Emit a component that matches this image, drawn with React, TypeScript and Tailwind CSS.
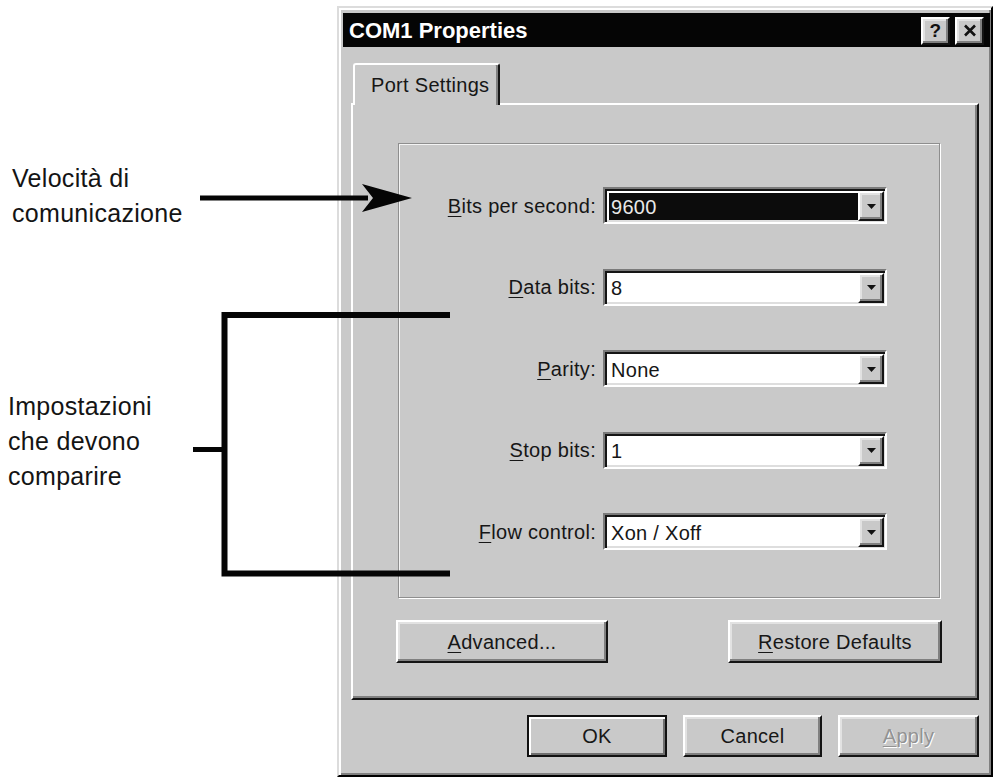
import React from 'react'

const raised =
  'border-2 border-t-white border-l-white border-r-[#141414] border-b-[#141414] shadow-[inset_-2px_-2px_0_#808080,inset_2px_2px_0_#e2e2e2]'

function Key({ children }: { children: React.ReactNode }) {
  return <span className="underline underline-offset-[3px] decoration-1">{children}</span>
}

function Combo({ value, selected }: { value: string; selected?: boolean }) {
  return (
    <div className="w-[284px] h-[37px] flex border-2 border-t-[#7a7a7a] border-l-[#7a7a7a] border-r-white border-b-white shadow-[inset_2px_2px_0_#151515,inset_-2px_-2px_0_#dedede] bg-white">
      <div className="flex-1 pt-[4px] pl-[4px] pb-[2px]">
        <div
          className={`h-full flex items-center pl-[2px] ${
            selected ? 'bg-[#0c0c0c] text-[#e8e8e8]' : 'text-[#161616]'
          }`}
        >
          {value}
        </div>
      </div>
      <div className={`w-[26px] mt-[2px] mb-[1px] mr-[1px] flex items-center justify-center bg-[#c9c9c9] ${raised}`}>
        <svg width="9" height="5" viewBox="0 0 9 5">
          <polygon points="0,0 9,0 4.5,5" fill="#111" />
        </svg>
      </div>
    </div>
  )
}

function Row({ label, value, selected }: { label: React.ReactNode; value: string; selected?: boolean }) {
  return (
    <div className="flex items-center h-[37px]">
      <div className="w-[198px] text-right pr-[1px]">{label}</div>
      <div className="ml-[6px]">
        <Combo value={value} selected={selected} />
      </div>
    </div>
  )
}

function Button({
  children,
  width,
  height,
  isDefault,
  disabled,
}: {
  children: React.ReactNode
  width: string
  height: string
  isDefault?: boolean
  disabled?: boolean
}) {
  return (
    <div
      className={`${width} ${height} flex items-center justify-center bg-[#c9c9c9] ${
        isDefault
          ? 'border-2 border-[#111] shadow-[inset_2px_2px_0_#fff,inset_-2px_-2px_0_#6f6f6f]'
          : raised
      } ${disabled ? 'text-[#939393] [text-shadow:1px_1px_0_#fff]' : 'text-[#171717]'}`}
    >
      {children}
    </div>
  )
}

function Dialog() {
  return (
    <div className="mt-[6px] w-[656px] h-[771px] shrink-0 bg-[#c9c9c9] border-2 border-t-[#dcdcdc] border-l-[#dcdcdc] border-r-black border-b-black shadow-[inset_2px_2px_0_#fff,inset_-2px_-2px_0_#808080] pt-[5px] pl-[4px] pr-[1px] text-[20px] tracking-[0.3px] text-[#161616]">
      <div className="h-[34px] bg-[#050505] flex items-center justify-between pl-[6px] pr-[6px]">
        <span className="text-white font-bold text-[22px] tracking-normal">COM1 Properties</span>
        <div className="flex gap-[5px] pt-[1px]">
          <div className={`w-[29px] h-[28px] flex items-center justify-center bg-[#c9c9c9] ${raised}`}>
            <span className="font-bold text-[19px] leading-none text-[#111]">?</span>
          </div>
          <div className={`w-[29px] h-[28px] flex items-center justify-center bg-[#c9c9c9] ${raised}`}>
            <svg width="14" height="13" viewBox="0 0 14 13">
              <path d="M2 1.5 L12 11.5 M12 1.5 L2 11.5" stroke="#111" strokeWidth="2.6" />
            </svg>
          </div>
        </div>
      </div>

      <div className="mt-[16px] ml-[8px] mr-[11px]">
        <div className="flex pl-[2px]">
          <div className="relative z-10 -mb-[2px] w-[147px] h-[42px] bg-[#c9c9c9] border-t-2 border-l-2 border-r-2 border-t-white border-l-white border-r-[#141414] shadow-[inset_-2px_0_0_#808080] rounded-t-[3px] pl-[16px] pt-[5px]">
            Port Settings
          </div>
        </div>
        <div className="h-[597px] border-2 border-t-white border-l-white border-r-[#141414] border-b-[#141414] shadow-[inset_-2px_-2px_0_#808080]">
          <div className="mt-[38px] ml-[45px] w-[542px] h-[455px] border border-[#8e8e8e] shadow-[1px_1px_0_#fff,inset_1px_1px_0_#f4f4f4] pt-[43px]">
            <div className="flex flex-col gap-[44.5px]">
              <Row label={<><Key>B</Key>its per second:</>} value="9600" selected />
              <Row label={<><Key>D</Key>ata bits:</>} value="8" />
              <Row label={<><Key>P</Key>arity:</>} value="None" />
              <Row label={<><Key>S</Key>top bits:</>} value="1" />
              <Row label={<><Key>F</Key>low control:</>} value="Xon / Xoff" />
            </div>
          </div>
          <div className="mt-[22px] ml-[43px] flex gap-[120px]">
            <Button width="w-[212px]" height="h-[43px]">
              <span><Key>A</Key>dvanced...</span>
            </Button>
            <Button width="w-[214px]" height="h-[43px]">
              <span><Key>R</Key>estore Defaults</span>
            </Button>
          </div>
        </div>
        <div className="mt-[15px] flex justify-end gap-[16px]">
          <Button width="w-[140px]" height="h-[42px]" isDefault>
            OK
          </Button>
          <Button width="w-[139px]" height="h-[42px]">
            Cancel
          </Button>
          <Button width="w-[141px]" height="h-[42px]" disabled>
            <span><Key>A</Key>pply</span>
          </Button>
        </div>
      </div>
    </div>
  )
}

export default function App() {
  return (
    <div className="relative w-[998px] h-[779px] bg-white overflow-hidden font-['Liberation_Sans',Arial,sans-serif] text-[#141414]">
      <div className="flex h-full">
        <div className="w-[337px] shrink-0 pl-[12px] pt-[161px] text-[25px] leading-[35px] tracking-[0.3px]">
          <p>
            Velocità di
            <br />
            comunicazione
          </p>
          <p className="mt-[158px] -ml-[4px]">
            Impostazioni
            <br />
            che devono
            <br />
            comparire
          </p>
        </div>
        <Dialog />
      </div>

      {/* annotation arrow and bracket drawn over the dialog */}
      <svg
        className="absolute inset-0 pointer-events-none"
        width="998"
        height="779"
        viewBox="0 0 998 779"
      >
        <rect x="200" y="195.5" width="168" height="5" fill="#050505" />
        <polygon points="412,198 362,184 373,198 362,212" fill="#050505" />
        <path d="M450 315 H224.5 V573.5 H450" fill="none" stroke="#050505" strokeWidth="6" strokeLinejoin="miter" />
        <rect x="193" y="447" width="32" height="5" fill="#050505" />
      </svg>
    </div>
  )
}
